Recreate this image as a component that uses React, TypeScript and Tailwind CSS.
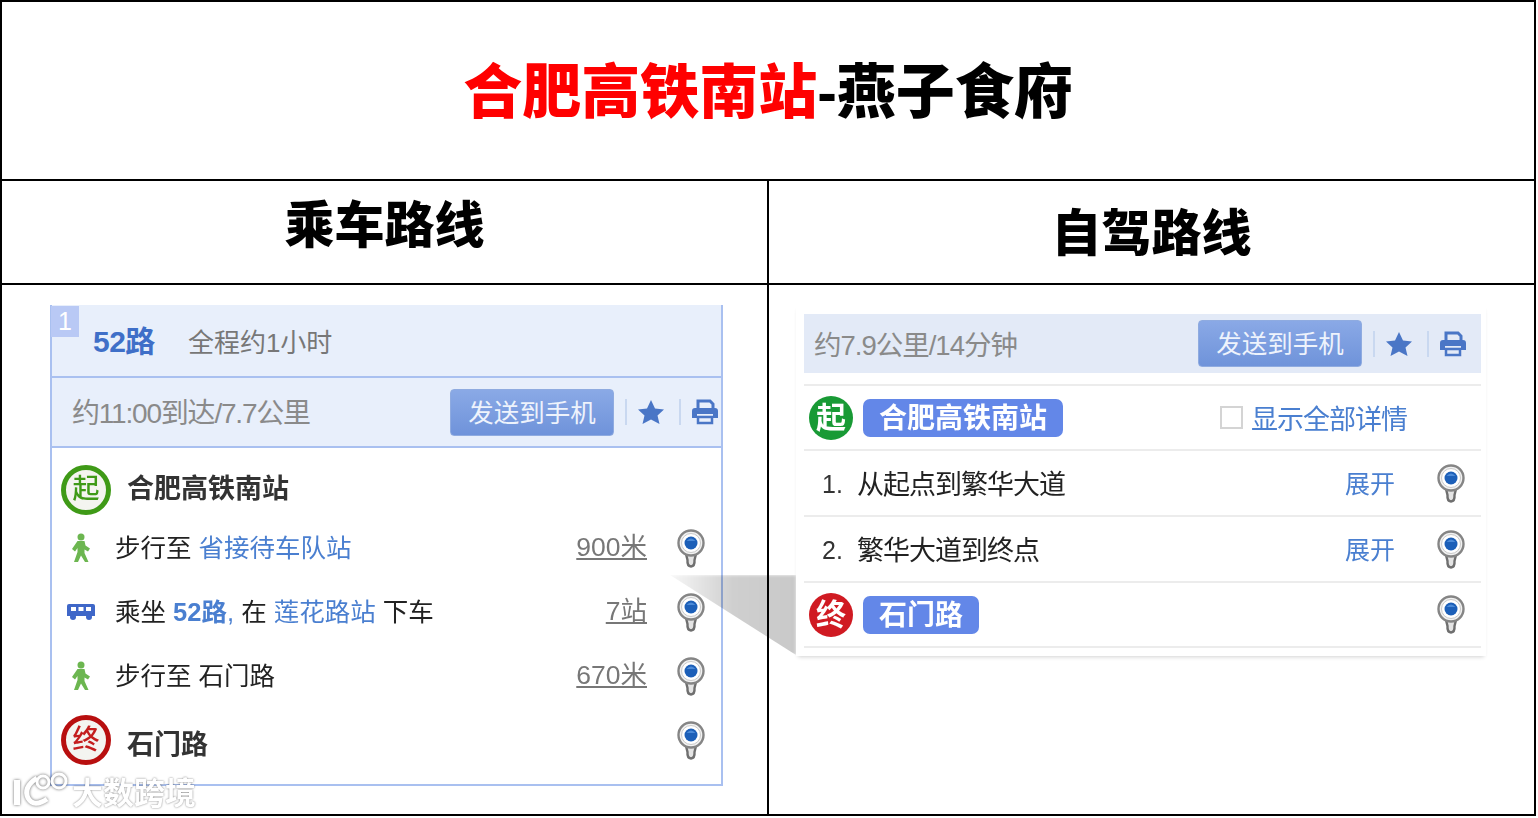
const CJK = 'font-["Liberation_Sans","Noto_Sans_CJK_SC",sans-serif]'

// Locator pin used at the end of every route step
function Pin() {
  return (
    <svg width="28" height="40" viewBox="0 0 28 40" className="shrink-0 mt-[1px]">
      <path d="M9 25 L19 25 L17.5 31 Q18 37 14 37.5 Q10 37 10.5 31 Z" fill="#e4e4e4" stroke="#6f6f6f" strokeWidth="2.4" />
      <circle cx="14" cy="14" r="12.5" fill="#f2f2f2" stroke="#858585" strokeWidth="2.4" />
      <circle cx="14" cy="14" r="9.5" fill="#fff" stroke="#c9c9c9" />
      <circle cx="14" cy="14" r="6.5" fill="#1c5fb8" />
      <path d="M9.5 12 Q14 7 18.5 12 Z" fill="#4b8ad8" />
    </svg>
  )
}

function Walker() {
  return (
    <svg width="20" height="30" viewBox="0 0 20 30" className="shrink-0">
      <circle cx="10" cy="4" r="3.5" fill="#6cb650" />
      <path d="M6.5 8 L13.5 8 L14.5 12.5 L19 15.5 L17 18.5 L13.5 16.5 L13.5 20 L17.5 29 L14 29 L10 22.5 L7 29 L3 29 L6.5 19 L6.5 15 L4 18.5 L1 16 Z" fill="#6cb650" />
    </svg>
  )
}

function Bus() {
  return (
    <svg width="30" height="18" viewBox="0 0 30 18" className="shrink-0">
      <path d="M3 1 H27 Q29 1 29 3 V13 H1 V3 Q1 1 3 1 Z" fill="#3f67c8" />
      <rect x="5" y="4" width="5" height="4" fill="#fff" />
      <rect x="12.5" y="4" width="5" height="4" fill="#fff" />
      <rect x="20" y="4" width="5" height="4" fill="#fff" />
      <circle cx="7" cy="14" r="3" fill="#3f67c8" />
      <circle cx="23" cy="14" r="3" fill="#3f67c8" />
    </svg>
  )
}

function Star() {
  return (
    <svg width="28" height="26" viewBox="0 0 28 26" className="shrink-0">
      <path d="M14 1 L18 9.5 L27 10.5 L20.5 16.5 L22.5 25 L14 20.5 L5.5 25 L7.5 16.5 L1 10.5 L10 9.5 Z" fill="#4a76c6" />
    </svg>
  )
}

function Printer() {
  return (
    <svg width="28" height="26" viewBox="0 0 28 26" className="shrink-0">
      <path d="M7 10 V2 H19 L22 5 V10" fill="none" stroke="#4a76c6" strokeWidth="3" />
      <path d="M4 9 H24 Q27 9 27 12 V19 H22 V15 H6 V19 H1 V12 Q1 9 4 9 Z" fill="#4a76c6" />
      <rect x="7" y="18" width="14" height="6" fill="none" stroke="#4a76c6" strokeWidth="2.5" />
    </svg>
  )
}

function Tools() {
  return (
    <div className="flex items-center">
      <button className="w-[164px] h-[47px] rounded-[4px] border border-[#8fabe0] bg-gradient-to-b from-[#8aa9e6] to-[#6f93da] pt-[2px] text-[25.5px] text-[#eef3fc]">
        发送到手机
      </button>
      <span className="ml-[11px] w-[2px] h-[26px] bg-[#c9d8f0]" />
      <span className="ml-[10px]"><Star /></span>
      <span className="ml-[14px] w-[2px] h-[26px] bg-[#c9d8f0]" />
      <span className="ml-[10px]"><Printer /></span>
    </div>
  )
}

function Step({ icon, children, dist }: { icon: React.ReactNode; children: React.ReactNode; dist: string }) {
  return (
    <div className="h-[64px] flex items-center pl-[13px] pr-[16px]">
      <div className="w-[32px] flex justify-center">{icon}</div>
      <div className="ml-[18px] flex-1 text-[25.5px] text-[#222] whitespace-nowrap">{children}</div>
      <span className="text-[26.5px] text-[#777] underline underline-offset-2 mr-[30px]">{dist}</span>
      <Pin />
    </div>
  )
}

function Badge({ label, ring }: { label: string; ring: string }) {
  return (
    <div className={`w-[50px] h-[50px] rounded-full border-[5px] bg-[#f4f4f0] flex items-center justify-center text-[27px] font-medium leading-none ${ring}`}>
      {label}
    </div>
  )
}

function BusRoute() {
  return (
    <div className="relative ml-[48px] mt-[20px] w-[673px] border-x-2 border-b-2 border-[#a9c0f0]">
      <div className="absolute -left-[1px] top-[1px] w-[28px] h-[31px] bg-[#b9c9f5] text-white text-[25px] pl-[7px] leading-[30px]">1</div>
      <div className="h-[73px] bg-[#e8effb] flex items-center pl-[41px] pt-[2px] border-b-2 border-[#a9c0f0]">
        <span className="text-[30px] font-bold text-[#3f6fc8] tracking-[-0.5px]">52路</span>
        <span className="ml-[33px] pt-[4px] text-[26px] text-[#777]">全程约1小时</span>
      </div>
      <div className="h-[70px] bg-[#e8effb] flex items-center justify-between pl-[20px] pr-[2px] border-b-2 border-[#a9c0f0]">
        <span className="pt-[4px] text-[28px] text-[#8a8a8a] tracking-[-1.2px]">约11:00到达/7.7公里</span>
        <Tools />
      </div>
      <div className="h-[70px] flex items-center pl-[9px] pt-[13px]">
        <Badge label="起" ring="border-[#3f9a17] text-[#3f9a17]" />
        <span className="ml-[16px] text-[27px] font-bold text-[#333]">合肥高铁南站</span>
      </div>
      <div className="mt-[-2px]">
        <Step icon={<Walker />} dist="900米">
          步行至 <span className="text-[#4a7fd0]">省接待车队站</span>
        </Step>
        <Step icon={<Bus />} dist="7站">
          乘坐 <span className="text-[#4a7fd0] font-bold">52路</span><span className="text-[#4a7fd0]">,</span> 在 <span className="text-[#4a7fd0]">莲花路站</span> 下车
        </Step>
        <Step icon={<Walker />} dist="670米">
          步行至 石门路
        </Step>
      </div>
      <div className="h-[66px] flex items-center pl-[9px] pr-[16px] mt-[-1px] mb-[11px]">
        <Badge label="终" ring="border-[#b80f0f] text-[#c41d1d]" />
        <span className="ml-[16px] pt-[10px] flex-1 text-[27px] font-bold text-[#333]">石门路</span>
        <Pin />
      </div>
    </div>
  )
}

function Stop({ label, name, color }: { label: string; name: string; color: string }) {
  return (
    <div className="flex items-center">
      <div className={`w-[44px] h-[44px] rounded-full flex items-center justify-center text-white text-[30px] font-bold leading-none ${color}`}>{label}</div>
      <div className="ml-[10px] px-[16px] pt-[3px] h-[38px] rounded-[7px] bg-[#6387e8] text-white text-[28px] font-bold flex items-center">{name}</div>
    </div>
  )
}

function DriveRow({ no, text }: { no: string; text: string }) {
  return (
    <div className="h-[66px] flex items-center pl-[18px] pr-[16px] border-b-2 border-[#ececec] text-[27px]">
      <span className="w-[35px] pt-[3px] text-[25px] text-[#333]">{no}</span>
      <span className="flex-1 pt-[4px] text-[#222] tracking-[-1px]">{text}</span>
      <span className="pt-[4px] mr-[42px] text-[25px] text-[#4a7fd0]">展开</span>
      <Pin />
    </div>
  )
}

function DriveRoute() {
  return (
    <div className="relative z-10 ml-[27px] mt-[20px] w-[690px] h-[351px] bg-white pl-[8px] pr-[5px] pt-[9px] shadow-[0_3px_4px_-2px_rgba(0,0,0,0.18)]">
      <div className="h-[59px] bg-[#e3eaf7] flex items-center justify-between pl-[10px] pr-[14px]">
        <span className="pt-[4px] text-[27.5px] text-[#8a8a8a] tracking-[-1px]">约7.9公里/14分钟</span>
        <Tools />
      </div>
      <div className="mt-[11px] border-t-2 border-[#ececec]">
        <div className="h-[65px] flex items-center pl-[5px] pr-[74px] justify-between border-b-2 border-[#ececec]">
          <Stop label="起" name="合肥高铁南站" color="bg-[#189a35]" />
          <div className="flex items-center">
            <span className="w-[23px] h-[23px] border-2 border-[#d4d4d4] bg-white" />
            <span className="ml-[8px] pt-[5px] text-[27px] text-[#4a7fd0] tracking-[-1px]">显示全部详情</span>
          </div>
        </div>
        <DriveRow no="1." text="从起点到繁华大道" />
        <DriveRow no="2." text="繁华大道到终点" />
        <div className="h-[65px] flex items-center pl-[5px] pr-[16px] justify-between border-b-2 border-[#ececec]">
          <Stop label="终" name="石门路" color="bg-[#d01a22]" />
          <Pin />
        </div>
      </div>
    </div>
  )
}

export default function App() {
  return (
    <div className={`relative w-[1538px] h-[818px] bg-white overflow-hidden ${CJK}`}>
      <div className="w-[1536px] h-[816px] border-2 border-black flex flex-col">
        <div className="h-[179px] pt-[6px] flex items-center justify-center border-b-2 border-black text-[59px] font-black leading-none text-black">
          <span className="text-[#ff0000]">合肥高铁南站</span>-燕子食府
        </div>
        <div className="h-[104px] flex border-b-2 border-black text-[50px] font-black leading-none text-black">
          <div className="w-[767px] flex items-center justify-center pb-[12px] border-r-2 border-black">乘车路线</div>
          <div className="flex-1 flex items-center justify-center pt-[4px]">自驾路线</div>
        </div>
        <div className="flex-1 flex">
          <div className="w-[767px] border-r-2 border-black">
            <div className="blur-[0.5px]">
              <BusRoute />
            </div>
          </div>
          <div className="flex-1 blur-[0.5px]">
            <DriveRoute />
          </div>
        </div>
      </div>

      {/* Grey wedge left over from the slide, runs behind the driving card */}
      <div className="absolute left-[670px] top-[575px] w-[126px] h-[80px] blur-[1.5px] bg-gradient-to-r from-[#00000008] via-[#00000030] to-[#00000036] [clip-path:polygon(0_0,100%_0,100%_100%)]" />

      {/* Watermark */}
      <div className="absolute left-[12px] bottom-[8px] flex items-center text-white">
        <svg width="60" height="38" viewBox="0 0 60 38" fill="none" stroke="#fff" className="drop-shadow-[0_0_1.5px_rgba(0,0,0,0.6)]">
          <path d="M5 8 V33" strokeWidth="6" />
          <path d="M25 6 Q11 15 16 26 Q22 36 35 27" strokeWidth="5" />
          <circle cx="31" cy="10" r="6" strokeWidth="3" />
          <circle cx="47" cy="9" r="7" strokeWidth="3" />
        </svg>
        <span className="pt-[4px] text-[31px] font-bold leading-none [text-shadow:0_0_2px_rgba(0,0,0,0.55)]">大数跨境</span>
      </div>
    </div>
  )
}
